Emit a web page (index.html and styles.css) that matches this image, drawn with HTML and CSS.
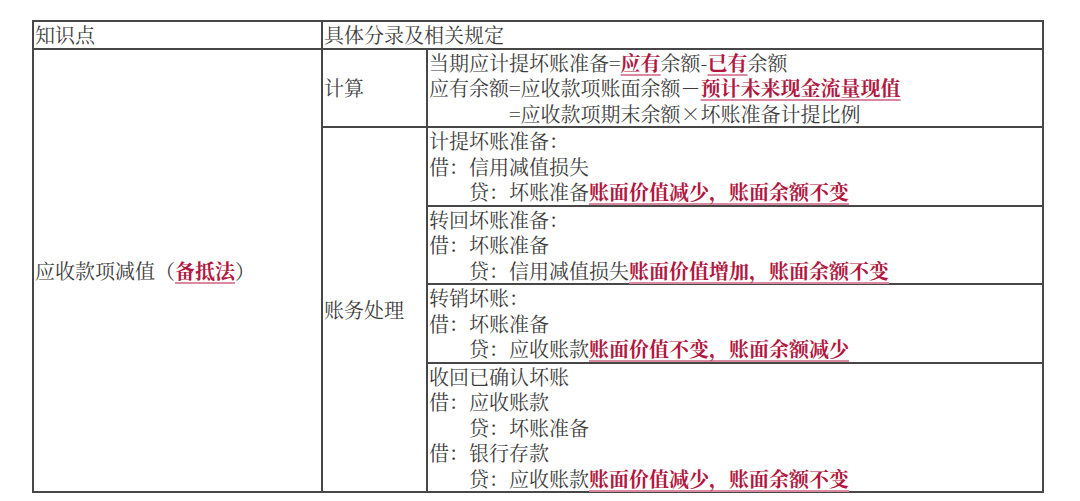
FILE: index.html
```html
<!DOCTYPE html>
<html lang="zh-CN">
<head>
<meta charset="utf-8">
<title>应收款项减值</title>
<link rel="stylesheet" href="styles.css">
</head>
<body>
<table class="kb">
  <colgroup>
    <col class="c1">
    <col class="c2">
    <col class="c3">
  </colgroup>
  <tr class="head">
    <th>知识点</th>
    <th colspan="2">具体分录及相关规定</th>
  </tr>
  <tr>
    <td rowspan="5" class="mid">应收款项减值（<span class="hl">备抵法</span>）</td>
    <td class="mid">计算</td>
    <td>
      <div>当期应计提坏账准备=<span class="hl">应有</span>余额-<span class="hl">已有</span>余额</div>
      <div>应有余额=应收款项账面余额－<span class="hl">预计未来现金流量现值</span></div>
      <div class="in4">=应收款项期末余额×坏账准备计提比例</div>
    </td>
  </tr>
  <tr>
    <td rowspan="4" class="mid">账务处理</td>
    <td>
      <div>计提坏账准备：</div>
      <div>借：信用减值损失</div>
      <div class="in2">贷：坏账准备<span class="hl">账面价值减少，账面余额不变</span></div>
    </td>
  </tr>
  <tr>
    <td>
      <div>转回坏账准备：</div>
      <div>借：坏账准备</div>
      <div class="in2">贷：信用减值损失<span class="hl">账面价值增加，账面余额不变</span></div>
    </td>
  </tr>
  <tr>
    <td>
      <div>转销坏账：</div>
      <div>借：坏账准备</div>
      <div class="in2">贷：应收账款<span class="hl">账面价值不变，账面余额减少</span></div>
    </td>
  </tr>
  <tr>
    <td>
      <div>收回已确认坏账</div>
      <div>借：应收账款</div>
      <div class="in2">贷：坏账准备</div>
      <div>借：银行存款</div>
      <div class="in2">贷：应收账款<span class="hl">账面价值减少，账面余额不变</span></div>
    </td>
  </tr>
</table>
</body>
</html>
```

FILE: styles.css
```css
html, body {
  margin: 0;
  padding: 0;
  background: #ffffff;
}

body {
  font-family: "Noto Serif CJK SC", "Noto Sans CJK SC", "Liberation Serif", serif;
  font-size: 20px;
  color: #3d3d3d;
}

.kb {
  margin: 20px 0 0 32px;
  border-collapse: collapse;
  table-layout: fixed;
  width: 1010px;
}

.c1 { width: 289px; }
.c2 { width: 105px; }
.c3 { width: 616px; }

.kb th,
.kb td {
  border: 2px solid #474747;
  padding: 0 1px;
  line-height: 25.5px;
  text-align: left;
  vertical-align: top;
  font-weight: 400;
  white-space: nowrap;
}

.kb td.mid {
  vertical-align: middle;
}

.in2 {
  padding-left: 2em;
}

.in4 {
  padding-left: 4em;
}

.hl {
  color: #b3173f;
  font-weight: 700;
  text-decoration: underline;
  text-decoration-color: #d98aa0;
  text-decoration-thickness: 2px;
  text-underline-offset: 3px;
}
```
